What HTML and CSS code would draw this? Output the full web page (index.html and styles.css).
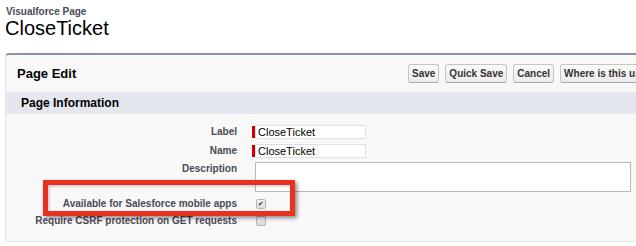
FILE: index.html
```html
<!DOCTYPE html>
<html>
<head>
<meta charset="utf-8">
<link rel="stylesheet" href="styles.css">
</head>
<body>
<div class="page-head">
  <div class="page-type">Visualforce Page</div>
  <h1 class="page-title">CloseTicket</h1>
</div>
<div class="panel">
  <div class="panel-header">
    <h2 class="panel-title">Page Edit</h2>
    <div class="buttons">
      <button class="btn">Save</button>
      <button class="btn">Quick Save</button>
      <button class="btn">Cancel</button>
      <button class="btn">Where is this used?</button>
    </div>
  </div>
  <div class="section">Page Information</div>
  <div class="section-body">
    <div class="row r-label">
      <div class="lbl">Label</div>
      <div class="val"><span class="req"></span><span class="input">CloseTicket</span></div>
    </div>
    <div class="row r-name">
      <div class="lbl">Name</div>
      <div class="val"><span class="req"></span><span class="input">CloseTicket</span></div>
    </div>
    <div class="row r-desc">
      <div class="lbl">Description</div>
      <div class="val"><span class="textarea"></span></div>
    </div>
    <div class="row r-avail">
      <div class="lbl">Available for Salesforce mobile apps</div>
      <div class="val"><span class="check checked">&#10004;</span></div>
    </div>
    <div class="row r-csrf">
      <div class="lbl">Require CSRF protection on GET requests</div>
      <div class="val"><span class="check"></span></div>
    </div>
  </div>
</div>
<div class="highlight"></div>
</body>
</html>
```
FILE: styles.css
```css
html, body {
  margin: 0;
  padding: 0;
  overflow: hidden;
  background: #ffffff;
  font-family: "Liberation Sans", Arial, sans-serif;
}
body {
  position: relative;
  width: 636px;
  height: 246px;
}
.page-head {
  padding: 6px 0 0 6px;
}
.page-type {
  font-size: 10px;
  line-height: 11px;
  font-weight: bold;
  color: #4a4a56;
}
.page-title {
  margin: 0 0 0 -1px;
  font-size: 20px;
  line-height: 22px;
  font-weight: normal;
  color: #000;
}
.panel {
  margin: 14px 0 0 5px;
  width: 760px;
  background: #f8f8f8;
  border-top: 2px solid #8a95a8;
  border-left: 1px solid #e2e4e7;
  border-bottom: 1px solid #e6e6e6;
  border-radius: 4px 0 0 4px;
  padding-bottom: 16px;
}
.panel-header {
  display: flex;
  align-items: center;
  height: 37px;
  border-bottom: 1px solid #e8e8e8;
}
.panel-title {
  width: 391px;
  margin: 0;
  padding-left: 11px;
  font-size: 13px;
  font-weight: bold;
  color: #000;
}
.buttons {
  display: flex;
  gap: 6px;
}
.btn {
  font-family: "Liberation Sans", Arial, sans-serif;
  font-size: 10px;
  font-weight: bold;
  color: #333;
  height: 19px;
  padding: 0 3px;
  border: 1px solid #c5c5c5;
  border-bottom-color: #a8a8a8;
  border-radius: 3px;
  background: linear-gradient(#fbfbfb, #ececec);
  white-space: nowrap;
}
.section {
  height: 21px;
  line-height: 21px;
  background: #e4e7ed;
  padding-left: 15px;
  font-size: 12px;
  font-weight: bold;
  color: #000;
}
.section-body {
  padding-top: 11px;
}
.row {
  display: grid;
  grid-template-columns: 238px 1fr;
  column-gap: 8px;
  align-items: center;
}
.lbl {
  text-align: right;
  padding-right: 7px;
  font-size: 10px;
  line-height: 12px;
  font-weight: bold;
  color: #4a4a56;
  white-space: nowrap;
}
.val {
  display: flex;
  align-items: center;
}
.r-label { height: 14px; }
.r-name { height: 14px; margin-top: 5px; }
.r-desc { margin-top: 4px; align-items: start; }
.r-desc .lbl { padding-top: 1px; }
.r-avail { height: 10px; margin-top: 6px; }
.r-csrf { height: 10px; margin-top: 7px; }
.req {
  width: 3px;
  height: 12px;
  background: #c00;
}
.input {
  box-sizing: border-box;
  width: 111px;
  height: 14px;
  background: #fff;
  border: 1px solid #e0e0e0;
  padding-left: 2px;
  font-size: 11px;
  line-height: 12px;
  color: #000;
}
.textarea {
  box-sizing: border-box;
  margin-left: 3px;
  width: 376px;
  height: 30px;
  background: #fff;
  border: 1px solid #b8b8b8;
}
.check {
  box-sizing: border-box;
  margin-left: 4px;
  width: 10px;
  height: 10px;
  border: 1px solid #b4b4b4;
  border-radius: 2px;
  background: linear-gradient(#f4f4f4, #dcdcdc);
  font-size: 7px;
  line-height: 8px;
  text-align: center;
  color: #333;
}
.highlight {
  position: absolute;
  left: 43px;
  top: 180px;
  width: 252px;
  height: 36px;
  box-sizing: border-box;
  border: 5px solid #e8321f;
  box-shadow: 2px 2px 4px rgba(0, 0, 0, 0.45), inset 1px 1px 3px rgba(0, 0, 0, 0.25);
}
```
